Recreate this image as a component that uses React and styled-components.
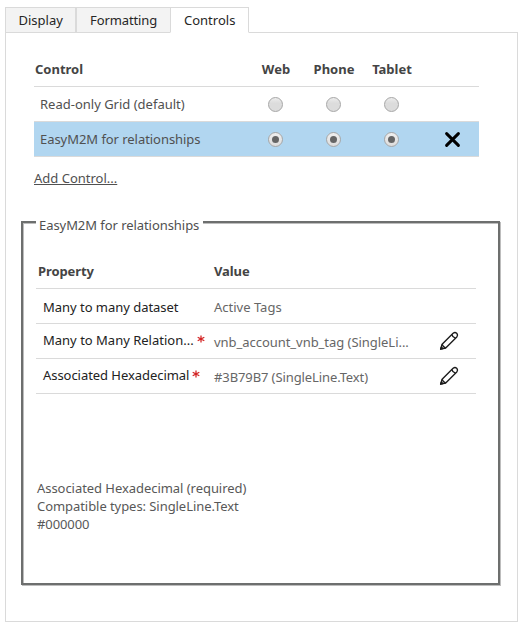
import React from "react";
import styled, { createGlobalStyle } from "styled-components";

const GlobalStyle = createGlobalStyle`
  * { box-sizing: border-box; }
  body {
    margin: 0;
    background: #fff;
    color: #505050;
    font-family: "Noto Sans", "Open Sans", sans-serif;
    font-size: 13px;
    line-height: 18px;
    overflow: hidden;
  }
`;

const Page = styled.main`
  display: flex;
  flex-direction: column;
  width: 522px;
  height: 626px;
  padding: 7px 4px 4px 5px;
`;

const TabBar = styled.nav`
  display: flex;
  height: 26px;
  margin-bottom: -1px;
`;

const Tab = styled.button`
  flex: none;
  width: ${(p) => p.$width}px;
  height: 26px;
  padding: 0 0 1px ${(p) => p.$indent}px;
  border: 1px solid #dadada;
  border-left-width: ${(p) => (p.$first ? 1 : p.$active ? 1 : 0)}px;
  border-right-width: ${(p) => (p.$first ? 2 : p.$active ? 1 : 0)}px;
  border-bottom-color: ${(p) => (p.$active ? "#fff" : "#dadada")};
  background: ${(p) => (p.$active ? "#fff" : "#f3f3f3")};
  color: #262626;
  font: inherit;
  letter-spacing: ${(p) => p.$spacing || 0}px;
  text-align: left;
  white-space: nowrap;
  position: relative;
  z-index: 1;
`;

const Panel = styled.section`
  flex: 1;
  border: 1px solid #dadada;
  padding: 20px 17px 0 15px;
`;

const ControlTable = styled.div`
  width: 445px;
  margin-left: 13px;
`;

const ControlRow = styled.div`
  display: grid;
  grid-template-columns: 213px 58px 58px 58px 1fr;
  align-items: center;
  height: 35px;
  border-bottom: 1px solid #dadada;
  background: ${(p) => (p.$selected ? "#b1d6f0" : "transparent")};
`;

const ControlHead = styled(ControlRow)`
  height: 34px;
  padding-bottom: 2px;
  color: #444;
  font-weight: 700;
`;

const HeadLabel = styled.span`
  padding-left: 1px;
`;

const DeviceLabel = styled.span`
  justify-self: center;
  white-space: nowrap;
`;

const ControlName = styled.span`
  padding-left: 6px;
  letter-spacing: ${(p) => p.$spacing || 0}px;
  white-space: nowrap;
`;

const Radio = styled.span`
  justify-self: center;
  display: flex;
  align-items: center;
  justify-content: center;
  width: 15px;
  height: 15px;
  margin-right: 1px;
  border: 1px solid #a6a6a6;
  border-radius: 50%;
  background: ${(p) =>
    p.$checked ? "linear-gradient(#efefef, #dcdcdc)" : "linear-gradient(#ececec, #dcdcdc 40%)"};
  &::after {
    content: "";
    width: 7px;
    height: 7px;
    border-radius: 50%;
    background: ${(p) => (p.$checked ? "#656565" : "transparent")};
  }
`;

const RemoveIcon = styled.svg`
  width: 17px;
  height: 17px;
  margin-left: 23px;
`;

const AddControl = styled.a`
  display: inline-block;
  margin: 13px 0 0 13px;
  height: 17px;
  line-height: 17px;
  text-decoration: underline;
  text-decoration-thickness: 1px;
  text-underline-offset: 1px;
  text-decoration-skip-ink: none;
`;

const Group = styled.div`
  width: 479px;
  height: 364px;
  margin-top: 34px;
  border: 2px solid #6d6f6e;
  box-shadow: inset 1px 1px 0 #bdbdbd, 1px 1px 0 #bdbdbd;
`;

const GroupTitle = styled.h2`
  width: 167px;
  height: 18px;
  margin: -7px 0 0 13px;
  padding-left: 3px;
  background: #fff;
  font-size: 13px;
  line-height: 18px;
  font-weight: 400;
  letter-spacing: -0.06px;
  white-space: nowrap;
`;

const PropertyTable = styled.div`
  width: 440px;
  margin: 20px 0 0 13px;
`;

const PropertyRow = styled.div`
  display: grid;
  grid-template-columns: 178px 226px 36px;
  align-items: center;
  height: 35px;
  border-bottom: 1px solid #dadada;
`;

const PropertyHead = styled(PropertyRow)`
  color: #444;
  font-weight: 700;
  padding-bottom: 1px;
`;

const PropertyHeadLabel = styled.span`
  padding-left: ${(p) => p.$indent || 0}px;
  letter-spacing: -0.1px;
`;

const PropertyName = styled.span`
  display: flex;
  gap: 3px;
  padding-left: 7px;
  padding-top: ${(p) => (p.$required ? 0 : 1)}px;
  padding-bottom: ${(p) => (p.$required ? 3 : 0)}px;
  color: #222;
  letter-spacing: ${(p) => p.$spacing || 0}px;
  white-space: nowrap;
`;

const Asterisk = styled.svg`
  flex: none;
  width: 8px;
  height: 8px;
  margin: 4px 0 0 0;
`;

const PropertyValue = styled.span`
  padding-top: 1px;
  color: #666;
  letter-spacing: ${(p) => p.$spacing || 0}px;
  white-space: nowrap;
`;

const PencilIcon = styled.svg`
  width: 20px;
  height: 20px;
  margin: 0 0 1px -1px;
`;

const Description = styled.div`
  display: flex;
  flex-direction: column;
  margin: 85px 0 0 14px;
  color: #585858;
`;

const DescriptionLine = styled.span`
  letter-spacing: ${(p) => p.$spacing || 0}px;
`;

function Remove() {
  return (
    <RemoveIcon viewBox="0 0 17 17" aria-label="Remove">
      <path d="M2.6 2.6 14.4 14.4M14.4 2.6 2.6 14.4" stroke="#000" strokeWidth="3" strokeLinecap="round" />
    </RemoveIcon>
  );
}

function Pencil() {
  return (
    <PencilIcon viewBox="0 0 20 20" aria-label="Edit" fill="none" stroke="#1c1c1c" strokeWidth="1.35" strokeLinejoin="round">
      <path d="M1.6 18.2 3.1 13.2 14.1 2.2Q16 .9 17.7 2.2 19.2 4 17.8 5.9L6.7 17 1.6 18.2Z" />
      <path d="M3.1 13.2Q4 15.9 6.7 17M12.8 3.5Q13.5 6.1 16.5 7.2" />
      <path d="M1.7 18.1 2.3 16.1 3.8 17.6Z" fill="#1c1c1c" />
    </PencilIcon>
  );
}

function Required() {
  return (
    <Asterisk viewBox="0 0 8 8" aria-label="required">
      <path d="M4 .4V7.6M.7 2.2 7.3 5.8M7.3 2.2.7 5.8" stroke="#d32323" strokeWidth="1.25" />
    </Asterisk>
  );
}

const controls = [
  { name: "Read-only Grid (default)", selected: false, spacing: 0 },
  { name: "EasyM2M for relationships", selected: true, spacing: -0.05 },
];

const properties = [
  { name: "Many to many dataset", value: "Active Tags", nameSpacing: -0.03 },
  { name: "Many to Many Relation...", value: "vnb_account_vnb_tag (SingleLi...", required: true, valueSpacing: -0.04 },
  { name: "Associated Hexadecimal", value: "#3B79B7 (SingleLine.Text)", required: true, nameSpacing: -0.05, valueSpacing: -0.1 },
];

export default function App() {
  return (
    <Page>
      <GlobalStyle />
      <TabBar>
        <Tab $first $width={72} $indent={12.5}>Display</Tab>
        <Tab $width={93} $indent={13} $spacing={-0.1}>Formatting</Tab>
        <Tab $active $width={79} $indent={13}>Controls</Tab>
      </TabBar>
      <Panel>
        <ControlTable>
          <ControlHead>
            <HeadLabel>Control</HeadLabel>
            <DeviceLabel>Web</DeviceLabel>
            <DeviceLabel>Phone</DeviceLabel>
            <DeviceLabel>Tablet</DeviceLabel>
          </ControlHead>
          {controls.map((c) => (
            <ControlRow key={c.name} $selected={c.selected}>
              <ControlName $spacing={c.spacing}>{c.name}</ControlName>
              <Radio $checked={c.selected} />
              <Radio $checked={c.selected} />
              <Radio $checked={c.selected} />
              {c.selected && <Remove />}
            </ControlRow>
          ))}
        </ControlTable>
        <AddControl>Add Control...</AddControl>
        <Group>
          <GroupTitle>EasyM2M for relationships</GroupTitle>
          <PropertyTable>
            <PropertyHead>
              <PropertyHeadLabel $indent={2}>Property</PropertyHeadLabel>
              <PropertyHeadLabel>Value</PropertyHeadLabel>
            </PropertyHead>
            {properties.map((p) => (
              <PropertyRow key={p.name}>
                <PropertyName $required={p.required} $spacing={p.nameSpacing}>
                  {p.name}
                  {p.required && <Required />}
                </PropertyName>
                <PropertyValue $spacing={p.valueSpacing}>{p.value}</PropertyValue>
                {p.required && <Pencil />}
              </PropertyRow>
            ))}
          </PropertyTable>
          <Description>
            <DescriptionLine $spacing={-0.05}>Associated Hexadecimal (required)</DescriptionLine>
            <DescriptionLine $spacing={-0.06}>Compatible types: SingleLine.Text</DescriptionLine>
            <DescriptionLine $spacing={-0.1}>#000000</DescriptionLine>
          </Description>
        </Group>
      </Panel>
    </Page>
  );
}
